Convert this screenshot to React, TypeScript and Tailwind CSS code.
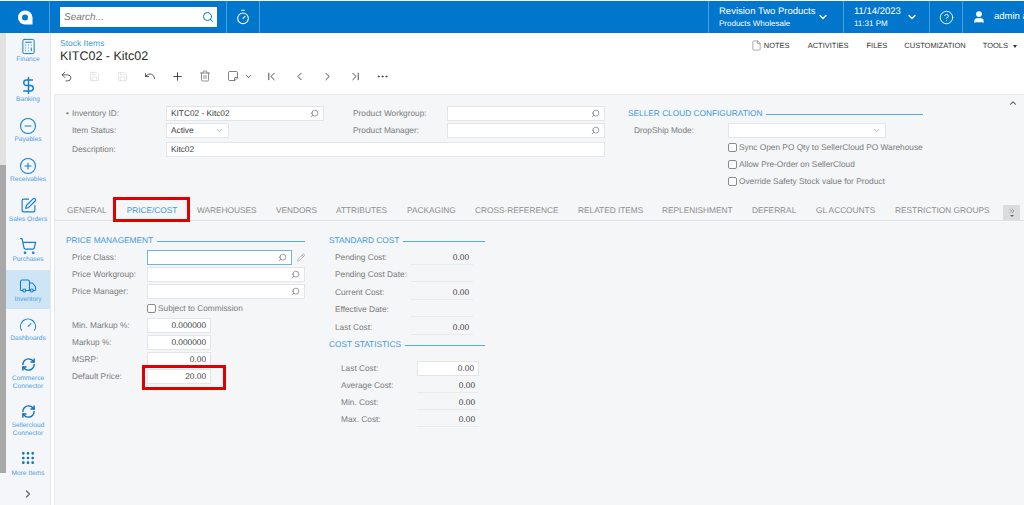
import type { ReactNode } from 'react';
import {
  Calculator,
  ChevronDown,
  ChevronFirst,
  ChevronLast,
  ChevronLeft,
  ChevronRight,
  ChevronUp,
  ChevronsRight,
  CircleHelp,
  CircleMinus,
  CirclePlus,
  DollarSign,
  Ellipsis,
  File,
  Gauge,
  Grip,
  Pencil,
  Plus,
  RefreshCw,
  Save,
  Search,
  ShoppingCart,
  SquarePen,
  StickyNote,
  Timer,
  Trash2,
  Truck,
  Undo,
  Undo2,
  User,
} from 'lucide-react';

const NAV = [
  { label: 'Finance', icon: <Calculator size={17} strokeWidth={1.4} /> },
  { label: 'Banking', icon: <DollarSign size={19} strokeWidth={1.8} /> },
  { label: 'Payables', icon: <CircleMinus size={18} strokeWidth={1.4} /> },
  { label: 'Receivables', icon: <CirclePlus size={18} strokeWidth={1.4} /> },
  { label: 'Sales Orders', icon: <SquarePen size={17} strokeWidth={1.6} /> },
  { label: 'Purchases', icon: <ShoppingCart size={18} strokeWidth={1.6} /> },
  { label: 'Inventory', icon: <Truck size={18} strokeWidth={1.4} />, active: true },
  { label: 'Dashboards', icon: <Gauge size={18} strokeWidth={1.4} /> },
];

const TABS = [
  { label: 'GENERAL', w: 'w-[56px]' },
  { label: 'PRICE/COST', w: 'w-[74px]', active: true },
  { label: 'WAREHOUSES', w: 'w-[79px]' },
  { label: 'VENDORS', w: 'w-[60px]' },
  { label: 'ATTRIBUTES', w: 'w-[71px]' },
  { label: 'PACKAGING', w: 'w-[68px]' },
  { label: 'CROSS-REFERENCE', w: 'w-[103px]' },
  { label: 'RELATED ITEMS', w: 'w-[84px]' },
  { label: 'REPLENISHMENT', w: 'w-[90px]' },
  { label: 'DEFERRAL', w: 'w-[64px]' },
  { label: 'GL ACCOUNTS', w: 'w-[79px]' },
  { label: 'RESTRICTION GROUPS', w: 'w-[108px]' },
];

function SideItem({ label, icon, active }: { label: string; icon: ReactNode; active?: boolean }) {
  return (
    <div className={`flex h-[40px] flex-col items-center pt-[7px] text-[#0f7fd0] ${active ? 'bg-[#cde5f5]' : ''}`}>
      <span className="flex h-[18px] items-center justify-center">{icon}</span>
      <span className="mt-[1px] text-[6.6px] leading-[8px] whitespace-nowrap text-[#4f9fdc]">{label}</span>
    </div>
  );
}

function SyncItem({ label, sub }: { label: string; sub: string }) {
  return (
    <div className="flex h-[47px] flex-col items-center pt-[6px] text-[#0a6fc0]">
      <span className="flex h-[18px] items-center justify-center">
        <RefreshCw size={15} strokeWidth={2.2} />
      </span>
      <span className="mt-[2px] text-center text-[6.6px] leading-[8px] text-[#4f9fdc]">
        {label}
        <br />
        {sub}
      </span>
    </div>
  );
}

function Box({
  children,
  className = '',
  search,
  select,
  focused,
}: {
  children?: ReactNode;
  className?: string;
  search?: boolean;
  select?: boolean;
  focused?: boolean;
}) {
  return (
    <div
      className={`flex h-[15px] items-center justify-between border bg-white px-[4px] text-[8.3px] text-[#3a3a3a] ${focused ? 'border-[#6fb2e4]' : 'border-[#e3e5e8]'} ${className}`}
    >
      <span className="flex-1 truncate">{children}</span>
      {search && <Search size={9} strokeWidth={1.5} className="-scale-x-100 text-[#555]" />}
      {select && <ChevronDown size={9} strokeWidth={1.5} className="text-[#888]" />}
    </div>
  );
}

function Row({
  label,
  children,
  labelW = 'w-[75px]',
  className = '',
}: {
  label: string;
  children?: ReactNode;
  labelW?: string;
  className?: string;
}) {
  return (
    <div className={`flex h-[17px] items-center ${className}`}>
      <span className={`${labelW} shrink-0 text-[8.3px] whitespace-nowrap text-[#7a7a7a]`}>{label}</span>
      {children}
    </div>
  );
}

function Check({ label }: { label: string }) {
  return (
    <div className="flex h-[17px] items-center gap-[2px] text-[8.3px] whitespace-nowrap text-[#7a7a7a]">
      <span className="h-[9px] w-[9px] shrink-0 rounded-[2px] border border-[#8a8a8a] bg-white" />
      <span>{label}</span>
    </div>
  );
}

function SectionTitle({ title }: { title: string }) {
  return (
    <div className="flex h-[14px] items-center gap-[4px] pt-[2px]">
      <span className="text-[8.3px] whitespace-nowrap text-[#3f97d8]">{title}</span>
      <span className="mt-[3px] h-px flex-1 bg-[#5aa8e0]" />
    </div>
  );
}

function ReadOnly({ value }: { value?: string }) {
  return (
    <div className="flex h-[15px] w-[62px] items-center justify-end border-b border-[#e8eaec] pr-[4px] text-[8.3px] text-[#3a3a3a]">
      {value}
    </div>
  );
}

function ToolIcon({ children, className = 'w-[27.7px]' }: { children: ReactNode; className?: string }) {
  return <span className={`flex shrink-0 items-center justify-center ${className}`}>{children}</span>;
}

export default function App() {
  return (
    <div className="flex h-[505px] w-[1024px] flex-col overflow-hidden bg-white font-['Liberation_Sans',Arial,sans-serif] [text-rendering:geometricPrecision]">
      <div className="h-px shrink-0 bg-white" />
      <header className="flex h-[32px] shrink-0 items-stretch bg-[#0077cc] text-white">
        <div className="flex w-[50px] items-center justify-center border-r border-[#4a9fdc]">
          <svg width="16" height="15" viewBox="0 0 16 15" fill="white">
            <path d="M8 0.5a7 7 0 0 0 0 14h7.5v-7.5a7 7 0 0 0-7.5-6.5zm0 4a3 3 0 1 1 0 6 3 3 0 0 1 0-6z" fillRule="evenodd" />
          </svg>
        </div>
        <div className="flex w-[177px] items-center border-r border-[#4a9fdc] pl-[10px]">
          <div className="flex h-[20px] w-[157px] items-center justify-between bg-white pr-[3px] pl-[4px]">
            <span className="text-[10px] text-[#777] italic">Search...</span>
            <Search size={12} strokeWidth={2} className="text-[#0077cc]" />
          </div>
        </div>
        <div className="flex w-[33px] items-center justify-center border-r border-[#4a9fdc]">
          <Timer size={16} strokeWidth={1.6} />
        </div>
        <div className="w-[449px] border-r border-[#4a9fdc]" />
        <div className="flex w-[135px] items-center justify-between border-r border-[#4a9fdc] pr-[14px] pl-[10px]">
          <div>
            <div className="text-[9.5px] leading-[12px]">Revision Two Products</div>
            <div className="text-[8px] leading-[11px]">Products Wholesale</div>
          </div>
          <ChevronDown size={12} strokeWidth={2.5} />
        </div>
        <div className="flex w-[86px] items-center justify-between border-r border-[#4a9fdc] pr-[11px] pl-[10px]">
          <div>
            <div className="text-[9.5px] leading-[12px]">11/14/2023</div>
            <div className="text-[8px] leading-[11px]">11:31 PM</div>
          </div>
          <ChevronDown size={12} strokeWidth={2.5} />
        </div>
        <div className="flex w-[33px] items-center justify-center border-r border-[#4a9fdc]">
          <CircleHelp size={15} strokeWidth={1.5} />
        </div>
        <div className="flex flex-1 items-center overflow-hidden pl-[9px] whitespace-nowrap">
          <User size={14} fill="white" strokeWidth={2} className="shrink-0" />
          <span className="ml-[8px] text-[9.5px]">admin admin</span>
        </div>
      </header>

      <div className="flex min-h-0 flex-1">
        <aside className="flex w-[51px] shrink-0 border-r border-[#e4e7ea] bg-[#f4f6fa]">
          <div className="flex h-[440px] w-[6px] shrink-0 flex-col">
            <div className="h-[132px] bg-[#e2e2e2]" />
            <div className="flex-1 bg-[#a8a8a8]" />
          </div>
          <div className="-mt-[3px] flex w-[44px] flex-col">
            {NAV.map((item) => (
              <SideItem key={item.label} {...item} />
            ))}
            <SyncItem label="Commerce" sub="Connector" />
            <SyncItem label="Sellercloud" sub="Connector" />
            <div className="flex h-[40px] flex-col items-center pt-[6px] text-[#0a6fc0]">
              <span className="flex h-[18px] items-center justify-center">
                <Grip size={16} strokeWidth={2} />
              </span>
              <span className="mt-[3px] text-[6.6px] leading-[8px] whitespace-nowrap text-[#4f9fdc]">More Items</span>
            </div>
            <div className="flex h-[22px] items-center justify-center text-[#666]">
              <ChevronRight size={12} strokeWidth={2.5} />
            </div>
          </div>
        </aside>

        <main className="flex min-w-0 flex-1 flex-col">
          <div className="flex h-[29px] shrink-0 items-start justify-between pt-[5px] pr-[7px] pl-[9px]">
            <div>
              <div className="text-[8.5px] leading-[10px] text-[#3f97d8]">Stock Items</div>
              <div className="mt-[1px] text-[12.5px] leading-[14px] text-[#2a2a2a]">KITC02 - Kitc02</div>
            </div>
            <div className="flex items-center pt-[2px] text-[7.5px] text-[#333]">
              <File size={11} strokeWidth={1.2} className="mr-[2px] text-[#6b6b6b]" />
              <span className="mr-[18px]">NOTES</span>
              <span className="mr-[18px]">ACTIVITIES</span>
              <span className="mr-[17px]">FILES</span>
              <span className="mr-[17px]">CUSTOMIZATION</span>
              <span className="mr-[5px]">TOOLS</span>
              <span className="mt-[1px] h-0 w-0 border-x-[2.5px] border-t-[3px] border-x-transparent border-t-[#333]" />
            </div>
          </div>

          <div className="flex h-[32px] shrink-0 items-center pb-[4px] pl-[2px] text-[#333]">
            <ToolIcon><Undo2 size={13} strokeWidth={1.4} /></ToolIcon>
            <ToolIcon><Save size={11} strokeWidth={1.2} className="text-[#d2d2d2]" /></ToolIcon>
            <ToolIcon><Save size={11} strokeWidth={1.2} className="text-[#d2d2d2]" /></ToolIcon>
            <ToolIcon><Undo size={12} strokeWidth={1.6} /></ToolIcon>
            <ToolIcon><Plus size={13} strokeWidth={1.6} /></ToolIcon>
            <ToolIcon><Trash2 size={12} strokeWidth={1.4} className="text-[#666]" /></ToolIcon>
            <ToolIcon className="ml-[2px] w-[24px]"><StickyNote size={12} strokeWidth={1.5} className="-scale-y-100 text-[#555]" /></ToolIcon>
            <ToolIcon className="w-[6px]"><ChevronDown size={9} strokeWidth={2} className="shrink-0" /></ToolIcon>
            <ToolIcon className="ml-[7px] w-[27.7px]"><ChevronFirst size={13} strokeWidth={1.6} /></ToolIcon>
            <ToolIcon><ChevronLeft size={13} strokeWidth={1.6} /></ToolIcon>
            <ToolIcon><ChevronRight size={13} strokeWidth={1.6} /></ToolIcon>
            <ToolIcon><ChevronLast size={13} strokeWidth={1.6} /></ToolIcon>
            <ToolIcon><Ellipsis size={13} strokeWidth={1.6} /></ToolIcon>
          </div>

          <div className="ml-[3px] min-h-0 flex-1 border-t border-l border-[#e6e8ea] bg-[#f5f6f8]">
            <div className="flex h-[103px] pt-[10px] pl-[11px]">
              <div className="w-[539px]">
                <div className="flex h-[17px] items-center">
                  <span className="w-[100px] shrink-0 text-[8.3px] text-[#7a7a7a]">
                    <span className="inline-block w-[6px]">•</span>Inventory ID:
                  </span>
                  <Box search className="w-[158px]">KITC02 - Kitc02</Box>
                  <span className="ml-[29px] w-[94px] shrink-0 text-[8.3px] text-[#7a7a7a]">Product Workgroup:</span>
                  <Box search className="w-[158px]" />
                </div>
                <div className="flex h-[17px] items-center">
                  <span className="w-[100px] shrink-0 pl-[6px] text-[8.3px] text-[#7a7a7a]">Item Status:</span>
                  <Box select className="w-[63px]">Active</Box>
                  <span className="ml-[124px] w-[94px] shrink-0 text-[8.3px] text-[#7a7a7a]">Product Manager:</span>
                  <Box search className="w-[158px]" />
                </div>
                <div className="mt-[2px] flex h-[17px] items-center">
                  <span className="w-[100px] shrink-0 pl-[6px] text-[8.3px] text-[#7a7a7a]">Description:</span>
                  <Box className="w-[439px]">Kitc02</Box>
                </div>
              </div>
              <div className="ml-[23px] w-[295px]">
                <SectionTitle title="SELLER CLOUD CONFIGURATION" />
                <div className="mt-[3px] flex h-[17px] items-center pl-[6px]">
                  <span className="w-[94px] shrink-0 text-[8.3px] text-[#7a7a7a]">DropShip Mode:</span>
                  <Box select className="w-[158px]" />
                </div>
                <div className="pl-[100px]">
                  <Check label="Sync Open PO Qty to SellerCloud PO Warehouse" />
                  <Check label="Allow Pre-Order on SellerCloud" />
                  <Check label="Override Safety Stock value for Product" />
                </div>
              </div>
              <ChevronUp size={10} strokeWidth={2.5} className="-mt-[7px] ml-[85px] text-[#444]" />
            </div>

            <div className="relative flex h-[23px] items-center border-b border-[#dfe1e4] pl-[6px]">
              {TABS.map((t) => (
                <span
                  key={t.label}
                  className={`${t.w} mt-[2px] shrink-0 text-[8.3px] whitespace-nowrap ${t.active ? 'pr-[4px] text-center text-[#3f97d8]' : 'pl-[6px] text-[#8c8c8c]'}`}
                >
                  {t.label}
                </span>
              ))}
              <span className="mt-[6px] ml-[6px] flex h-[15px] w-[17px] flex-col items-center justify-center bg-[#dcdcdc] text-[#666]">
                <ChevronsRight size={8} strokeWidth={1.6} className="shrink-0" />
                <span className="h-0 w-0 shrink-0 border-x-[2px] border-t-[2px] border-x-transparent border-t-[#666]" />
              </span>
              <div className="absolute -top-[1px] left-[58px] h-[25px] w-[77px] border-[3px] border-[#e00000]" />
            </div>

            <div className="flex pt-[11px] pl-[11px]">
              <div className="relative w-[239px]">
                <SectionTitle title="PRICE MANAGEMENT" />
                <div className="pt-[3px] pl-[6px]">
                  <Row label="Price Class:">
                    <Box search focused className="w-[158px]" />
                    <Pencil size={9} strokeWidth={1.2} className="ml-[5px] text-[#666]" />
                  </Row>
                  <Row label="Price Workgroup:"><Box search className="w-[158px]" /></Row>
                  <Row label="Price Manager:"><Box search className="w-[158px]" /></Row>
                  <div className="pl-[75px]"><Check label="Subject to Commission" /></div>
                  <Row label="Min. Markup %:"><Box className="w-[64px] text-right">0.000000</Box></Row>
                  <Row label="Markup %:"><Box className="w-[64px] text-right">0.000000</Box></Row>
                  <Row label="MSRP:"><Box className="w-[64px] text-right">0.00</Box></Row>
                  <Row label="Default Price:"><Box className="w-[64px] text-right">20.00</Box></Row>
                </div>
                <div className="absolute top-[133px] left-[76px] h-[25px] w-[84px] border-[3px] border-[#e00000]" />
              </div>
              <div className="ml-[24px] w-[156px]">
                <SectionTitle title="STANDARD COST" />
                <div className="pt-[3px] pl-[6px]">
                  <Row label="Pending Cost:" labelW="w-[76px]"><ReadOnly value="0.00" /></Row>
                  <Row label="Pending Cost Date:" labelW="w-[76px]"><ReadOnly /></Row>
                  <Row label="Current Cost:" labelW="w-[76px]" className="mt-[1px]"><ReadOnly value="0.00" /></Row>
                  <Row label="Effective Date:" labelW="w-[76px]"><ReadOnly /></Row>
                  <Row label="Last Cost:" labelW="w-[76px]" className="mt-[1px]"><ReadOnly value="0.00" /></Row>
                </div>
                <SectionTitle title="COST STATISTICS" />
                <div className="pt-[10px] pl-[12px]">
                  <Row label="Last Cost:" labelW="w-[76px]"><Box className="w-[62px] text-right">0.00</Box></Row>
                  <Row label="Average Cost:" labelW="w-[76px]"><ReadOnly value="0.00" /></Row>
                  <Row label="Min. Cost:" labelW="w-[76px]"><ReadOnly value="0.00" /></Row>
                  <Row label="Max. Cost:" labelW="w-[76px]"><ReadOnly value="0.00" /></Row>
                </div>
              </div>
            </div>
          </div>
        </main>
      </div>
    </div>
  );
}
